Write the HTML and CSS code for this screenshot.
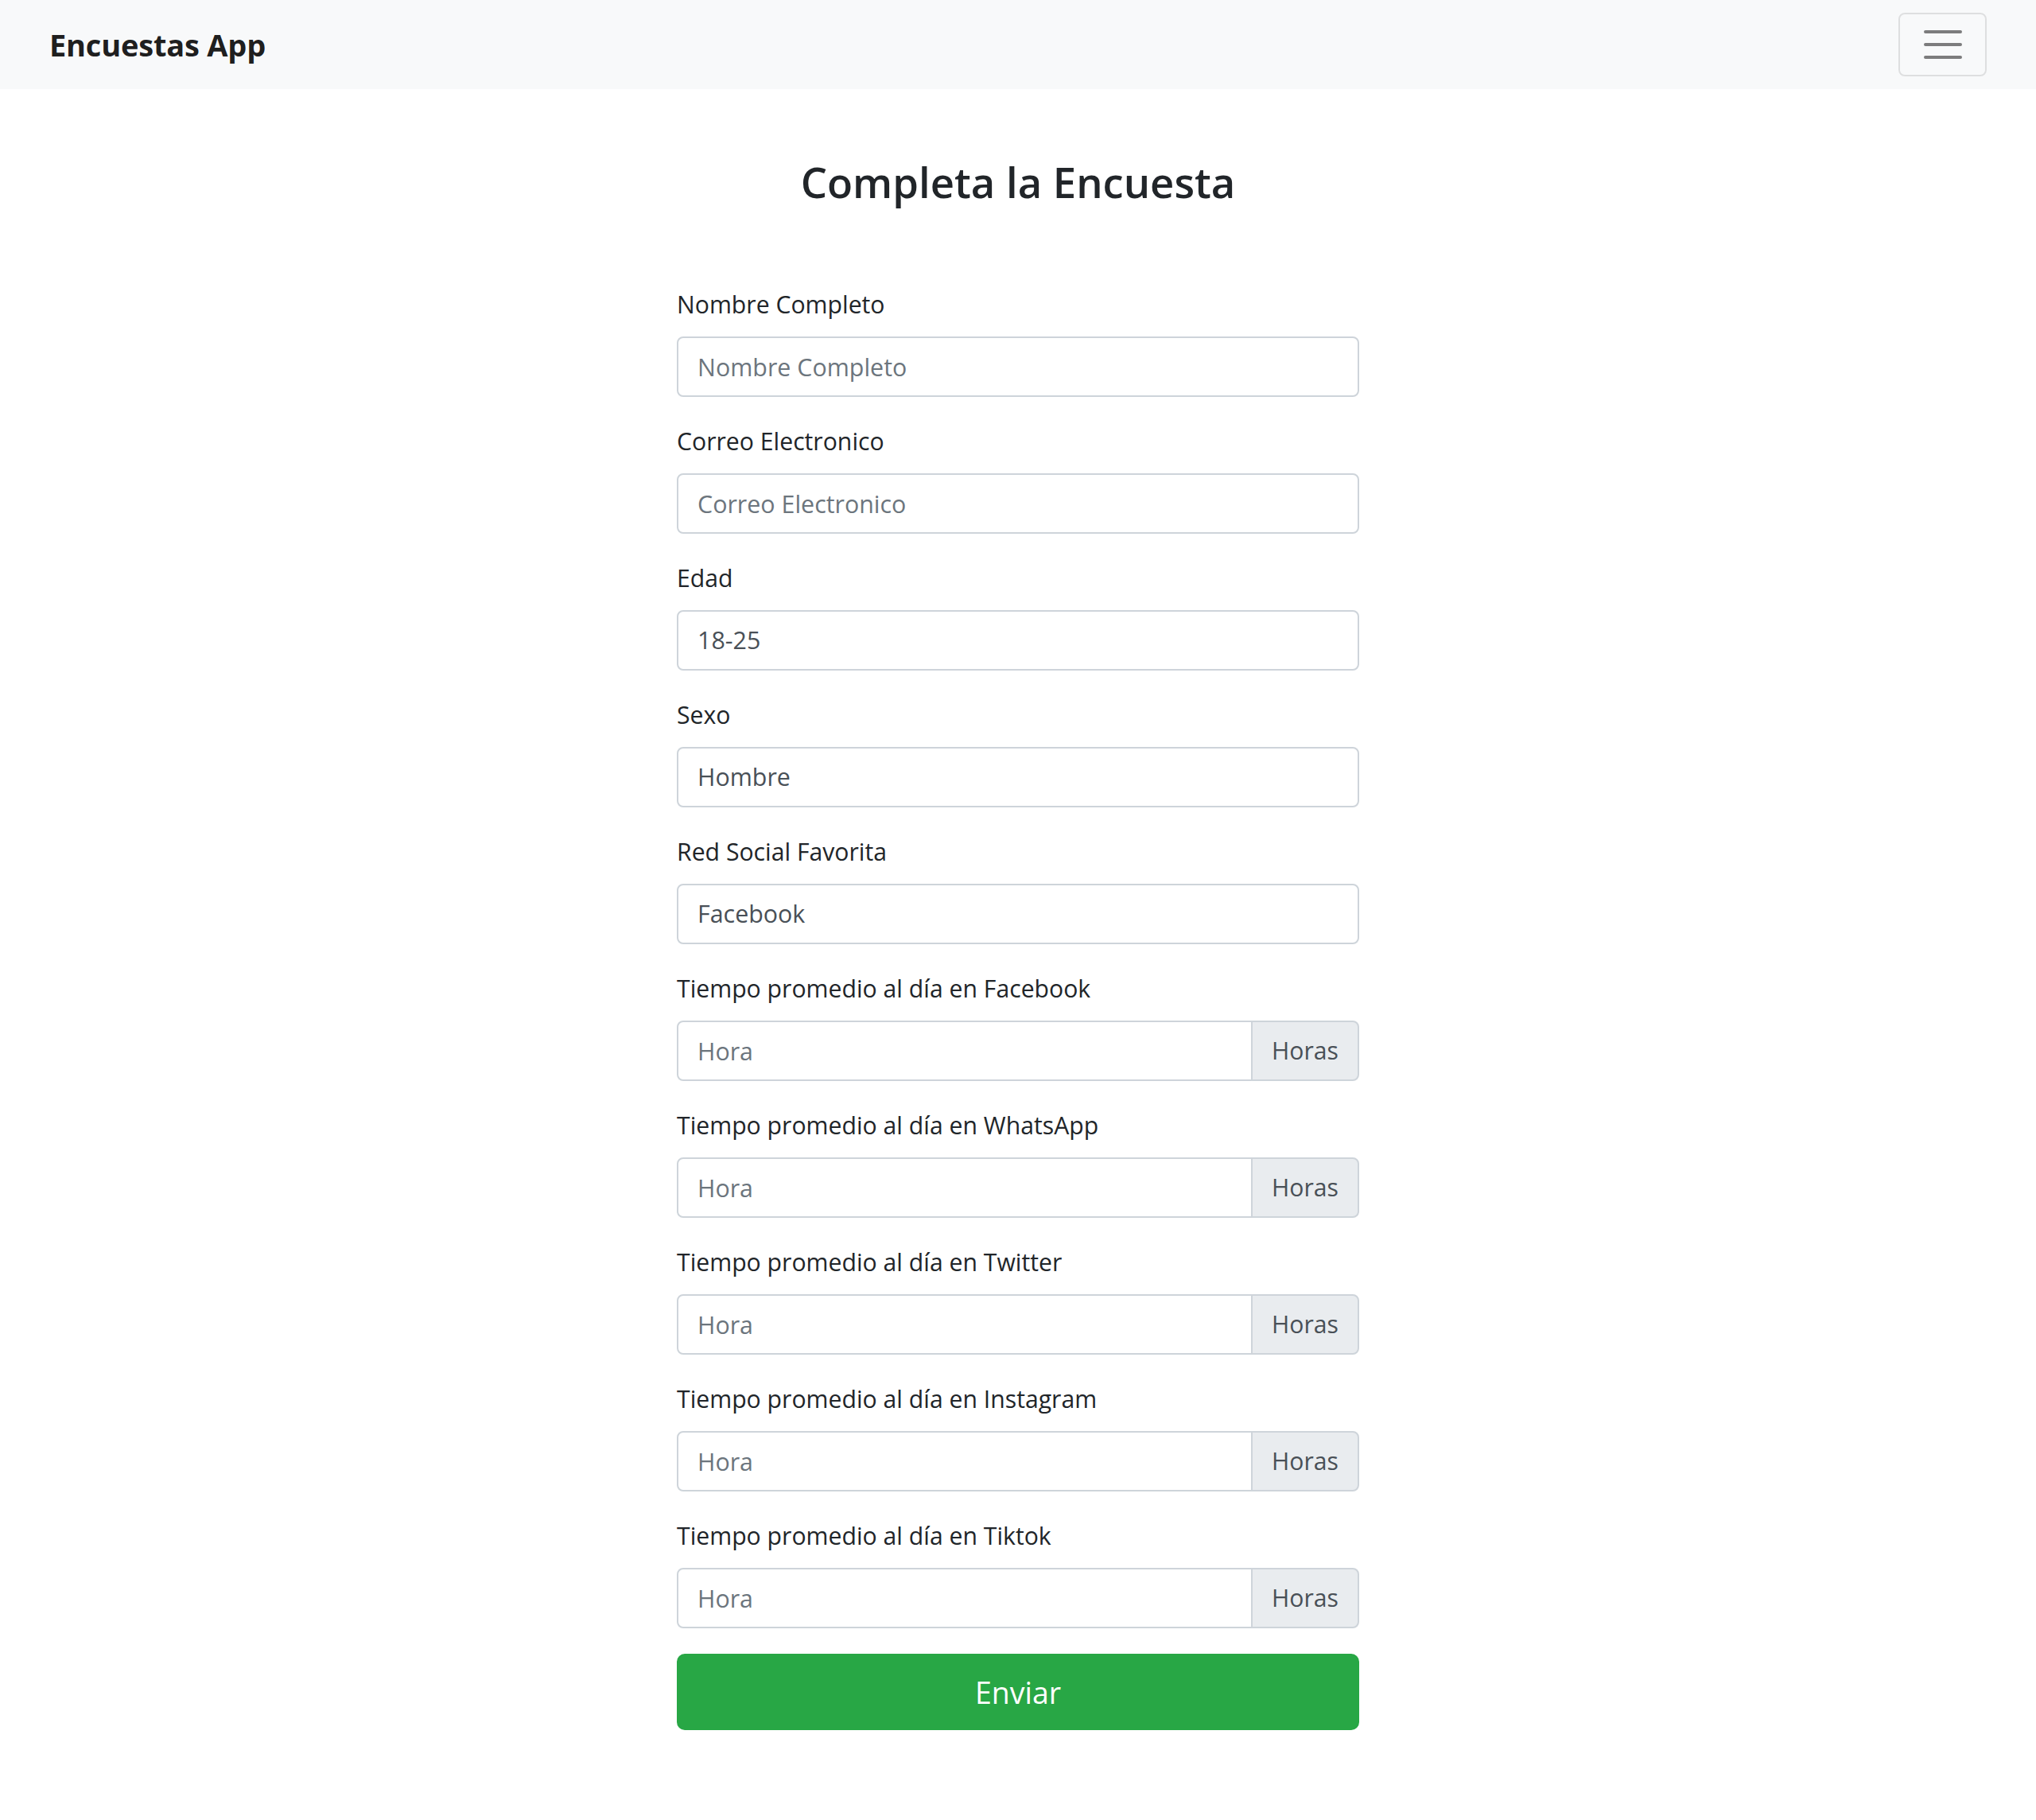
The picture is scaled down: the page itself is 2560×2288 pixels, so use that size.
FILE: index.html
```html
<!DOCTYPE html>
<html lang="es">
<head>
<meta charset="utf-8">
<title>Encuestas App</title>
<link rel="stylesheet" href="styles.css">
</head>
<body>
<nav class="navbar">
  <div class="nav-inner">
    <a class="brand" href="#">Encuestas App</a>
    <button class="toggler" type="button" aria-label="Menu">
      <svg class="toggler-icon" viewBox="0 0 30 30" width="60" height="60"><path d="M4 7h22M4 15h22M4 23h22" stroke="rgba(0,0,0,0.5)" stroke-width="2" stroke-linecap="round" stroke-miterlimit="10" fill="none"/></svg>
    </button>
  </div>
</nav>
<main class="page">
  <h2 class="title">Completa la Encuesta</h2>
  <form class="form">
    <div class="group">
      <label class="label">Nombre Completo</label>
      <input class="control" type="text" placeholder="Nombre Completo">
    </div>
    <div class="group">
      <label class="label">Correo Electronico</label>
      <input class="control" type="text" placeholder="Correo Electronico">
    </div>
    <div class="group">
      <label class="label">Edad</label>
      <div class="control value">18-25</div>
    </div>
    <div class="group">
      <label class="label">Sexo</label>
      <div class="control value">Hombre</div>
    </div>
    <div class="group">
      <label class="label">Red Social Favorita</label>
      <div class="control value">Facebook</div>
    </div>
    <div class="group">
      <label class="label">Tiempo promedio al día en Facebook</label>
      <div class="input-group"><input class="control grouped" type="text" placeholder="Hora"><span class="addon">Horas</span></div>
    </div>
    <div class="group">
      <label class="label">Tiempo promedio al día en WhatsApp</label>
      <div class="input-group"><input class="control grouped" type="text" placeholder="Hora"><span class="addon">Horas</span></div>
    </div>
    <div class="group">
      <label class="label">Tiempo promedio al día en Twitter</label>
      <div class="input-group"><input class="control grouped" type="text" placeholder="Hora"><span class="addon">Horas</span></div>
    </div>
    <div class="group">
      <label class="label">Tiempo promedio al día en Instagram</label>
      <div class="input-group"><input class="control grouped" type="text" placeholder="Hora"><span class="addon">Horas</span></div>
    </div>
    <div class="group">
      <label class="label">Tiempo promedio al día en Tiktok</label>
      <div class="input-group"><input class="control grouped" type="text" placeholder="Hora"><span class="addon">Horas</span></div>
    </div>
    <button class="submit" type="button">Enviar</button>
  </form>
</main>
</body>
</html>
```
FILE: styles.css
```css
* { box-sizing: border-box; }
html, body { margin: 0; padding: 0; }
body {
  font-family: "Open Sans", "Noto Sans", sans-serif;
  font-size: 30.2px;
  line-height: 48px;
  color: #212529;
  background: #fff;
}
.navbar {
  background: #f8f9fa;
  height: 112px;
  padding: 16px 32px;
}
.nav-inner {
  height: 80px;
  padding: 0 30px;
  display: flex;
  align-items: center;
  justify-content: space-between;
}
.brand {
  font-size: 38px;
  font-weight: 700;
  color: rgba(0,0,0,0.9);
  text-decoration: none;
  line-height: 60px;
  letter-spacing: -0.2px;
}
.toggler {
  width: 111px;
  height: 80px;
  border: 2px solid rgba(0,0,0,0.1);
  border-radius: 8px;
  background: transparent;
  padding: 0;
  display: flex;
  align-items: center;
  justify-content: center;
}
.toggler-icon { display: block; }
.page { display: flex; flex-direction: column; align-items: center; }
.title {
  margin: 78px 0 92px;
  font-size: 52.6px;
  font-weight: 600;
  line-height: 77px;
  text-align: center;
}
.form { width: 858px; }
.group { margin-bottom: 32px; }
.label {
  display: block;
  margin-bottom: 16px;
  line-height: 48px;
}
.control {
  display: block;
  width: 100%;
  height: 76px;
  padding: 12px 24px;
  font-family: inherit;
  font-size: 30.4px;
  line-height: 48px;
  color: #495057;
  background: #fff;
  border: 2px solid #ced4da;
  border-radius: 8px;
  outline: none;
}
.control::placeholder { color: #6c757d; opacity: 1; }
.input-group { display: flex; }
.control.grouped {
  flex: 1;
  min-width: 0;
  border-top-right-radius: 0;
  border-bottom-right-radius: 0;
}
.addon {
  display: flex;
  align-items: center;
  height: 76px;
  padding: 0 24px;
  margin-left: -2px;
  color: #495057;
  background: #e9ecef;
  border: 2px solid #ced4da;
  border-radius: 0 8px 8px 0;
  white-space: nowrap;
}
.submit {
  display: block;
  width: 100%;
  height: 96px;
  margin: 0;
  font-family: inherit;
  font-size: 37.5px;
  color: #fff;
  background: #28a745;
  border: 2px solid #28a745;
  border-radius: 10px;
}
```
